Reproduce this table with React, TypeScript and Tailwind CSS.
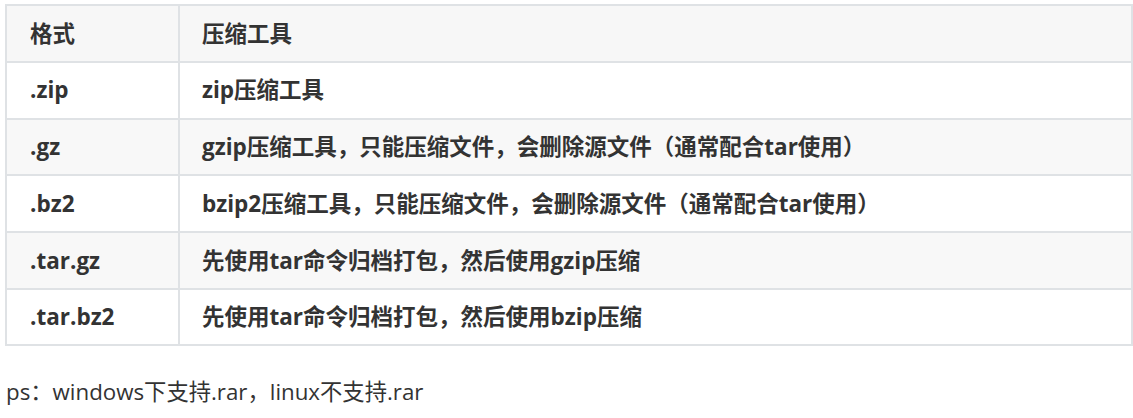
import React from "react";

const rows = [
  { fmt: ".zip", tool: "zip压缩工具" },
  { fmt: ".gz", tool: "gzip压缩工具，只能压缩文件，会删除源文件（通常配合tar使用）" },
  { fmt: ".bz2", tool: "bzip2压缩工具，只能压缩文件，会删除源文件（通常配合tar使用）" },
  { fmt: ".tar.gz", tool: "先使用tar命令归档打包，然后使用gzip压缩" },
  { fmt: ".tar.bz2", tool: "先使用tar命令归档打包，然后使用bzip压缩" },
];

const font = { fontFamily: '"Open Sans", "Noto Sans CJK SC", sans-serif' };

export default function App() {
  return (
    <div className="w-[1133px] h-[418px] bg-white text-[#333] overflow-hidden" style={font}>
      {/* Format table */}
      <div className="ml-[5px] mt-[4px] w-[1128px] border-2 border-[#dfe2e5] text-[22.5px] font-bold">
        <div className="flex h-[55px] bg-[#f7f7f7]">
          <div className="w-[171px] pl-[23px] flex items-center">格式</div>
          <div className="flex-1 pl-[22px] flex items-center border-l-2 border-[#dfe2e5]">压缩工具</div>
        </div>
        {rows.map((r, i) => (
          <div
            key={r.fmt}
            className={`flex h-[56.7px] border-t-2 border-[#dfe2e5] ${i % 2 === 1 ? "bg-[#f8f8f8]" : "bg-white"}`}
          >
            <div className="w-[171px] pl-[23px] flex items-center">{r.fmt}</div>
            <div className="flex-1 pl-[22px] flex items-center border-l-2 border-[#dfe2e5]">{r.tool}</div>
          </div>
        ))}
      </div>

      <p className="mt-[31px] ml-[6px] text-[22.3px] leading-[30px]">ps：windows下支持.rar，linux不支持.rar</p>
    </div>
  );
}
